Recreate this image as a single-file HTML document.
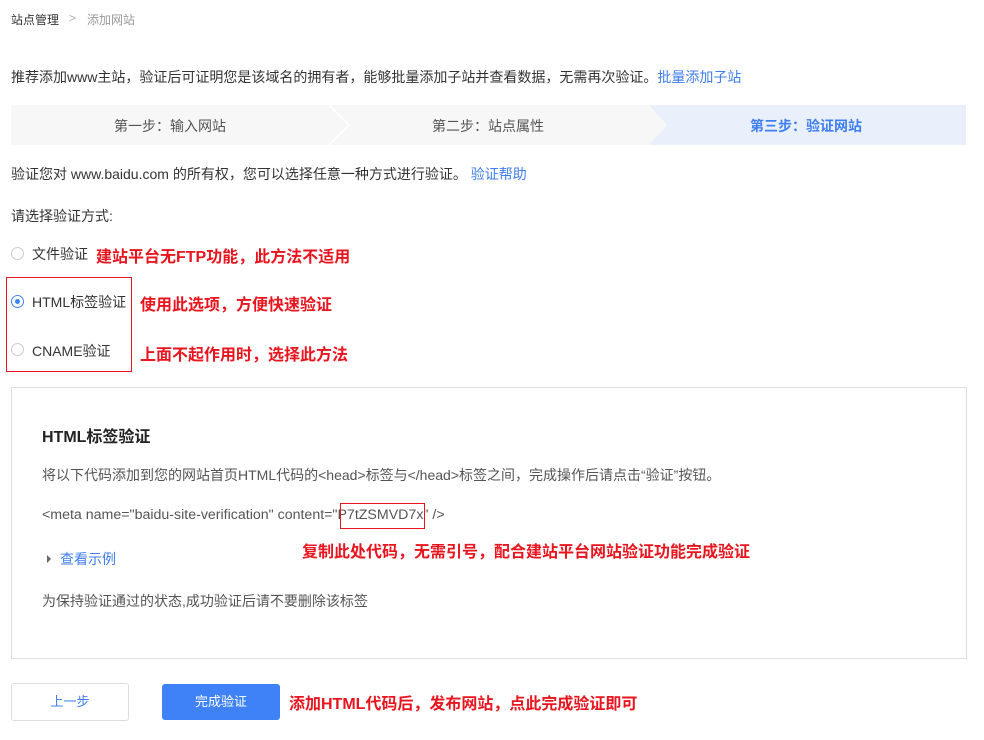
<!DOCTYPE html>
<html><head><meta charset="utf-8"><style>
*{margin:0;padding:0;box-sizing:border-box}
body{width:984px;height:740px;background:#fff;font-family:"Liberation Sans","Noto Sans CJK SC",sans-serif;font-size:14px;color:#333;position:relative;overflow:hidden}
.a{position:absolute;white-space:nowrap}
.red{color:#e8141e;font-weight:bold;font-size:16px}
.blue{color:#3f7ef0}
.radio{position:absolute;width:13px;height:13px;border:1px solid #ccc;border-radius:50%}
.radio.on{border-color:#3f82f8}
.radio.on:after{content:"";position:absolute;left:3px;top:3px;width:5px;height:5px;border-radius:50%;background:#3f82f8}
</style></head><body>
<div class="a" style="left:11px;top:11px;font-size:12px;color:#333">站点管理</div>
<div class="a" style="left:69px;top:11px;font-size:12px;color:#aaa">&gt;</div>
<div class="a" style="left:87px;top:11px;font-size:12px;color:#999">添加网站</div>
<div class="a" style="left:11px;top:67px">推荐添加www主站，验证后可证明您是该域名的拥有者，能够批量添加子站并查看数据，无需再次验证。<span class="blue">批量添加子站</span></div>
<svg class="a" style="left:11px;top:105px" width="955" height="40">
<rect x="0" y="0" width="955" height="40" fill="#f7f7f7"/>
<polygon points="638,0 955,0 955,40 638,40 656,20" fill="#e9f0fc"/>
<polyline points="318,0 338,20 318,40" fill="none" stroke="#fff" stroke-width="2"/>
</svg>
<div class="a" style="left:114px;top:116px;color:#555">第一步：输入网站</div>
<div class="a" style="left:432px;top:116px;color:#555">第二步：站点属性</div>
<div class="a" style="left:750px;top:116px;color:#3f7ef0;font-weight:bold">第三步：验证网站</div>
<div class="a" style="left:11px;top:164px">验证您对 www.baidu.com 的所有权，您可以选择任意一种方式进行验证。 <span class="blue">验证帮助</span></div>
<div class="a" style="left:11px;top:206px">请选择验证方式:</div>
<div class="radio" style="left:11px;top:247px"></div>
<div class="a" style="left:32px;top:244px">文件验证</div>
<div class="a red" style="left:96px;top:243px">建站平台无FTP功能，此方法不适用</div>
<div class="a" style="left:6px;top:277px;width:126px;height:95px;border:1px solid #e8141e"></div>
<div class="radio on" style="left:11px;top:295px"></div>
<div class="a" style="left:32px;top:292px">HTML标签验证</div>
<div class="a red" style="left:140px;top:291px">使用此选项，方便快速验证</div>
<div class="radio" style="left:11px;top:343px"></div>
<div class="a" style="left:32px;top:341px">CNAME验证</div>
<div class="a red" style="left:140px;top:341px">上面不起作用时，选择此方法</div>
<div class="a" style="left:11px;top:387px;width:956px;height:272px;border:1px solid #ddd"></div>
<div class="a" style="left:42px;top:423px;font-size:16px;font-weight:bold;color:#222">HTML标签验证</div>
<div class="a" style="left:42px;top:465px;color:#555">将以下代码添加到您的网站首页HTML代码的&lt;head&gt;标签与&lt;/head&gt;标签之间，完成操作后请点击“验证”按钮。</div>
<div class="a" style="left:42px;top:507px;color:#555;font-size:14.2px">&lt;meta name="baidu-site-verification" content="P7tZSMVD7x" /&gt;</div>
<div class="a" style="left:340px;top:503px;width:85px;height:26px;border:1px solid #e8141e"></div>
<div class="a red" style="left:302px;top:538px">复制此处代码，无需引号，配合建站平台网站验证功能完成验证</div>
<div class="a" style="left:47px;top:555px;width:0;height:0;border-left:4px solid #666;border-top:4px solid transparent;border-bottom:4px solid transparent"></div>
<div class="a blue" style="left:60px;top:549px">查看示例</div>
<div class="a" style="left:42px;top:591px;color:#555">为保持验证通过的状态,成功验证后请不要删除该标签</div>
<div class="a" style="left:11px;top:683px;width:118px;height:38px;border:1px solid #ddd;border-radius:3px;color:#3f7ef0;text-align:center;line-height:36px;font-size:13px">上一步</div>
<div class="a" style="left:162px;top:684px;width:118px;height:36px;background:#3f82f8;border-radius:3px;color:#fff;text-align:center;line-height:36px;font-size:13px">完成验证</div>
<div class="a red" style="left:289px;top:690px">添加HTML代码后，发布网站，点此完成验证即可</div>
</body></html>
